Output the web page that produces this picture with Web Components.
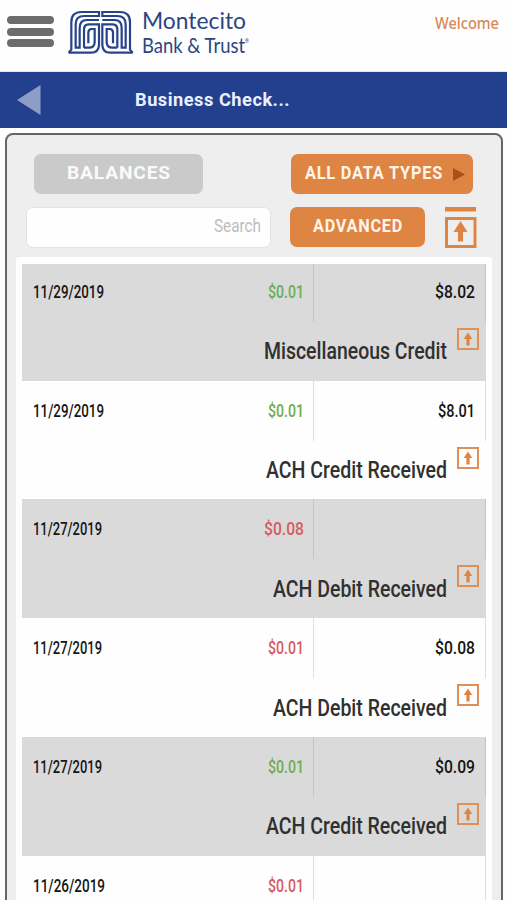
<!DOCTYPE html>
<html lang="en"><head><meta charset="utf-8"><title>Montecito Bank &amp; Trust</title>
<style>
html,body{margin:0;height:900px;overflow:hidden;background:#fefefe;font-family:Roboto,"Liberation Sans",sans-serif}
</style></head><body>
<bank-app></bank-app>
<script>
const define=(name,html,init)=>customElements.define(name,class extends HTMLElement{
  connectedCallback(){
    if(this.shadowRoot)return;
    this.attachShadow({mode:'open'}).innerHTML=html;
    if(init)init.call(this,this.shadowRoot);
  }
});

// One line of text condensed or widened to the width given in "w".
define('fit-text',`<style>:host{display:block;flex:none;white-space:nowrap;overflow:visible}span{display:inline-block;transform-origin:0 50%}</style><span><slot></slot></span>`,function(r){
  const w=+this.getAttribute('w'),s=r.querySelector('span');
  this.style.width=w+'px';
  s.style.transform='scaleX('+w/s.getBoundingClientRect().width+')';
});

define('bank-logo',`<style>:host{display:flex;flex:none;color:#2b4582}svg{display:block}
.name{padding:7px 0 0 8px;font-family:Lato,sans-serif;font-weight:400;line-height:25px}
.l1{font-size:24px;height:25px}.l2{font-size:21px;height:25px}.row{display:flex}sup{font:5px/6px Roboto,sans-serif;margin-top:6px}</style>
<svg width="66" height="60" viewBox="24 0 198 180" fill="none" stroke="#27438b" stroke-width="6.6">
<defs><g id="half"><path d="M26 158L34 149V67Q34 36 64 36H117V48H72Q47 48 47 73V143H59V84Q59 60 80 60H117"/><path d="M72 143V89Q72 73 86 73H117V136Q115 158 94 158H26"/><path d="M72 143H87Q103 143 104 127V87H95Q85 87 85 98V130"/></g></defs>
<use href="#half"/><use href="#half" transform="translate(244 0) scale(-1 1)"/></svg>
<div class="name"><fit-text class="l1" w="104">Montecito</fit-text><div class="row"><fit-text class="l2" w="103">Bank &amp; Trust</fit-text><sup>®</sup></div></div>`);

define('top-bar',`<style>:host{display:flex;height:72px;box-sizing:border-box;border-bottom:1px solid #e4e7ef;padding:0 8px 0 7px;align-items:flex-start}
.menu{width:47px;height:31px;margin-top:16px;display:flex;flex-direction:column;justify-content:space-between}.menu i{height:8px;border-radius:4px;background:#6c6c6c}
bank-logo{margin:0 0 0 14px}.w{margin-left:auto;margin-top:13px;color:#d58a57;font:500 16px/20px "Noto Sans",sans-serif}</style>
<div class="menu"><i></i><i></i><i></i></div><bank-logo></bank-logo><fit-text class="w" w="64">Welcome</fit-text>`);

define('title-bar',`<style>:host{display:flex;height:56px;background:#23408f;align-items:center;padding-left:17px;color:#e9f0ff}svg{display:block;margin-right:94px}fit-text{font:700 18px/24px Roboto,sans-serif;letter-spacing:.5px}</style>
<svg width="24" height="30"><path d="M0 15L23.5 0V30Z" fill="#8e9dc6"/></svg><fit-text w="155">Business Check...</fit-text>`);

define('app-button',`<style>:host{display:flex;flex:none;box-sizing:border-box;height:40px;border-radius:7px;background:#df8543;color:#fff4e8;font:700 17.5px/20px Roboto,sans-serif;letter-spacing:.8px;align-items:center;padding-bottom:2px}:host([off]){background:#cacaca;color:#fafafa}</style><slot></slot>`);

define('expand-icon',`<style>:host{display:block}svg{display:block}</style><svg width="22" height="22" viewBox="0 0 22 22"><rect x="1" y="1" width="20" height="20" fill="none" stroke="#df9058" stroke-width="2"/><path d="M11 4.5L15.3 11H12.6V17.5H9.4V11H6.7Z" fill="#df8543"/></svg>`);

define('tool-area',`<style>:host{display:flex;flex-direction:column;gap:13px;padding:19px 0 0 19px}.r{display:flex;align-items:center;height:40px}
.bal{width:169px;margin-left:8px;padding-left:33px}.bal fit-text{font-size:18.5px}.types{width:182px;margin-left:88px;padding-left:14px}.types svg{margin-left:10px;margin-top:3px}.adv{width:135px;margin-left:19px;padding-left:23px}
.search{box-sizing:border-box;width:245px;height:41px;border:1px solid #e3e3e3;border-radius:7px;background:#fefefe;display:flex;align-items:center;justify-content:flex-end;padding:0 9px 3px;color:#bdbdbd;font-size:19px}
.up{margin-left:20px;display:block}</style>
<div class="r"><app-button class="bal" off><fit-text w="104">BALANCES</fit-text></app-button><app-button class="types"><fit-text w="138">ALL DATA TYPES</fit-text><svg width="12" height="13"><path d="M0 0L12 6.5L0 13Z" fill="#a94f20"/></svg></app-button></div>
<div class="r"><div class="search"><fit-text w="47">Search</fit-text></div><app-button class="adv"><fit-text w="90">ADVANCED</fit-text></app-button>
<svg class="up" width="32" height="41"><g fill="#df8543"><path d="M0 0H31V4.5H0Z"/><path d="M15.5 14L22.5 25H18V34.5H13V25H8.5Z"/></g><rect x="1.5" y="11.5" width="28.5" height="28" fill="none" stroke="#df8543" stroke-width="3"/></svg></div>`);

define('entry-row','',function(r){
  const a=n=>this.getAttribute(n)||'';
  const width=t=>t?(t.endsWith('1')?(t==='$0.01'?36:37):40):0;
  const bal=a('balance'),amt=a('amount'),date=a('date');
  r.innerHTML=`<style>:host{display:block;height:118.75px;background:#fefefe}:host([shade]){background:#dadada}
  .top{display:flex;height:60px;font-weight:500;font-size:18.5px;line-height:24px;color:#151515}
  .top>div{display:flex;align-items:center;box-sizing:border-box}.date{width:150px;padding-left:11px}.amt{width:142px;justify-content:flex-end;padding-right:9px;border-right:1px solid #dfdfdf;color:#6fad52}.amt.debit{color:#d75c60}.bal{width:171.5px;justify-content:flex-end;padding-right:10px;border-right:1px solid #dfdfdf}:host([shade]) .amt,:host([shade]) .bal{border-right-color:#c3c3c3}
  .bottom{display:flex;justify-content:flex-end;align-items:flex-start;padding-right:6.5px;gap:10px;height:58px}.bottom fit-text{color:#303030;font-weight:500;font-size:23.5px;line-height:30px;margin-top:14.5px}expand-icon{margin-top:6px}
  :host(.first){height:117px}:host(.first) .top{height:58px}:host(.first) .top>div{padding-bottom:2px}</style>
  <div class="top"><div class="date"><fit-text w="${a('dw')||69}">${date}</fit-text></div><div class="amt ${a('kind')}"><fit-text w="${width(amt)}">${amt}</fit-text></div><div class="bal">${bal?`<fit-text w="${width(bal)}">${bal}</fit-text>`:''}</div></div>
  ${a('label')?`<div class="bottom"><fit-text w="${a('lw')}">${a('label')}</fit-text><expand-icon></expand-icon></div>`:''}`;
});

define('entry-list',`<style>:host{display:block;background:#fefefe;width:463.5px;padding:7px 6px 0;margin:9.5px 0 0 9px;border-radius:3px 3px 0 0}</style>
<entry-row class="first" shade date="11/29/2019" dw="71" amount="$0.01" balance="$8.02" label="Miscellaneous Credit" lw="183"></entry-row>
<entry-row date="11/29/2019" dw="71" amount="$0.01" balance="$8.01" label="ACH Credit Received" lw="181"></entry-row>
<entry-row shade date="11/27/2019" amount="$0.08" kind="debit" label="ACH Debit Received" lw="174"></entry-row>
<entry-row date="11/27/2019" amount="$0.01" kind="debit" balance="$0.08" label="ACH Debit Received" lw="174"></entry-row>
<entry-row shade date="11/27/2019" amount="$0.01" balance="$0.09" label="ACH Credit Received" lw="181"></entry-row>
<entry-row date="11/26/2019" dw="72" amount="$0.01" kind="debit"></entry-row>`);

define('bank-app',`<style>:host{display:block;width:507px;height:900px;overflow:hidden}
.panel{box-sizing:border-box;width:498px;height:790px;margin:5px 0 0 5px;border:2px solid #666;border-radius:8px;background:#eee}</style>
<top-bar></top-bar><title-bar></title-bar><div class="panel"><tool-area></tool-area><entry-list></entry-list></div>`);
</script></body></html>
